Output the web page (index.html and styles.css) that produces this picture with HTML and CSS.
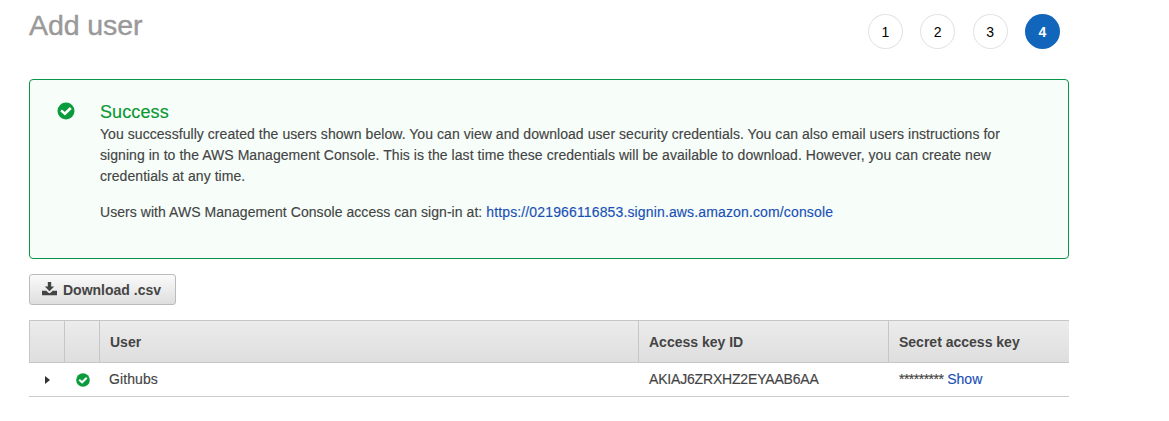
FILE: index.html
```html
<!DOCTYPE html>
<html lang="en">
<head>
    <meta charset="UTF-8">
    <meta name="viewport" content="width=device-width, initial-scale=1.0">
    <title>Add user</title>
    <link rel="stylesheet" href="styles.css">
</head>
<body>
    <div class="page">
        <header class="header">
            <h1>Add user</h1>
            <ol class="steps">
                <li class="step">1</li>
                <li class="step">2</li>
                <li class="step">3</li>
                <li class="step active">4</li>
            </ol>
        </header>

        <section class="alert">
            <svg class="alert-icon" viewBox="0 0 18 18">
                <circle cx="9" cy="9" r="8.5" fill="#0a9b3c"/>
                <path d="M4.1 8.4 L7.9 11.8 L13.8 6" fill="none" stroke="#fff" stroke-width="2.6"/>
            </svg>
            <div class="alert-body">
                <h2>Success</h2>
                <p class="line-1">You successfully created the users shown below. You can view and download user security credentials. You can also email users instructions for</p>
                <p class="line-2">signing in to the AWS Management Console. This is the last time these credentials will be available to download. However, you can create new</p>
                <p>credentials at any time.</p>
                <p class="signin">Users with AWS Management Console access can sign-in at: <a href="#">https://021966116853.signin.aws.amazon.com/console</a></p>
            </div>
        </section>

        <button class="download">
            <svg class="download-icon" viewBox="0 0 15 14">
                <path d="M5.8 0h3.4v4.5h3L7.5 9.3 2.8 4.5h3z" fill="#444"/>
                <path d="M0 8.8h4.3l1.8 1.8a2 2 0 0 0 2.8 0l1.8-1.8H15v4.4H0z" fill="#444"/>
            </svg>
            <span>Download .csv</span>
        </button>

        <table class="users">
            <thead>
                <tr>
                    <th class="col-expand"></th>
                    <th class="col-status"></th>
                    <th class="col-user">User</th>
                    <th class="col-key">Access key ID</th>
                    <th class="col-secret">Secret access key</th>
                </tr>
            </thead>
            <tbody>
                <tr>
                    <td><span class="arrow"></span></td>
                    <td>
                        <svg class="status-icon" viewBox="0 0 18 18">
                            <circle cx="9" cy="9" r="8.8" fill="#0a9b3c"/>
                            <path d="M4.1 8.6 L7.9 12 L13.8 6.2" fill="none" stroke="#fff" stroke-width="2.6"/>
                        </svg>
                    </td>
                    <td class="name">Githubs</td>
                    <td class="key">AKIAJ6ZRXHZ2EYAAB6AA</td>
                    <td><span class="stars">*********</span> <a href="#">Show</a></td>
                </tr>
            </tbody>
        </table>
    </div>
</body>
</html>
```
FILE: styles.css
```css
* {
    margin: 0;
    padding: 0;
    box-sizing: border-box;
}
body {
    font-family: "Liberation Sans", Arial, sans-serif;
    font-size: 14px;
    color: #444;
    background-color: #fff;
}
a {
    color: #1a50b5;
    text-decoration: none;
}
.page {
    width: 1040px;
    margin-left: 29px;
}
.header {
    display: flex;
    justify-content: space-between;
    height: 79px;
    padding-right: 9px;
}
.header h1 {
    margin-top: 9px;
    font-size: 28.5px;
    line-height: 33px;
    font-weight: normal;
    letter-spacing: -0.1px;
    color: #999;
    -webkit-text-stroke: 0.4px #999;
}
.steps {
    display: flex;
    gap: 17.4px;
    padding-top: 14px;
    list-style: none;
}
.step {
    width: 35px;
    height: 35px;
    line-height: 36px;
    border-radius: 50%;
    box-shadow: inset 0 0 0 1px #e3e3e3;
    text-align: center;
    color: #000;
}
.step.active {
    background-color: #1166bb;
    box-shadow: none;
    color: #fff;
    font-weight: bold;
}

.alert {
    display: flex;
    height: 180px;
    padding: 21px 27px;
    border: 1px solid #0a9648;
    border-radius: 4px;
    background-color: #f7fefa;
}
.alert-icon {
    width: 18px;
    height: 18px;
    margin: 1px 25px 0 0;
}
.alert-body {
    white-space: nowrap;
    line-height: 21px;
    letter-spacing: 0.055px;
    -webkit-text-stroke: 0.15px;
}
.alert-body h2 {
    margin-bottom: 1px;
    font-size: 18px;
    line-height: 22px;
    font-weight: normal;
    letter-spacing: 0.1px;
    color: #0a9632;
}
.alert-body .signin {
    margin-top: 15px;
}
.alert-body a {
    letter-spacing: 0.14px;
}

.download {
    display: flex;
    align-items: center;
    width: 147px;
    height: 31px;
    margin: 15px 0;
    padding-left: 12px;
    border: 1px solid #bbb;
    border-radius: 3px;
    background: linear-gradient(to bottom, #fafafa, #dedede);
    font-family: inherit;
    font-size: 14px;
    font-weight: bold;
    color: #444;
    white-space: nowrap;
}
.download-icon {
    width: 15px;
    height: 14px;
    margin: -2px 6px 0 0;
}

.users {
    width: 1040px;
    table-layout: fixed;
    border-collapse: separate;
    border-spacing: 0;
}
.users th {
    height: 43px;
    padding: 1px 10px 0;
    border-top: 1px solid #c6c6c6;
    border-bottom: 1px solid #c6c6c6;
    border-right: 1px solid #c6c6c6;
    background: linear-gradient(to bottom, #ececec, #dedede);
    text-align: left;
}
.users th:first-child {
    border-left: 1px solid #c6c6c6;
}
.users th:last-child {
    border-right: none;
}
.users td {
    height: 34px;
    padding: 0 10px 2px;
    border-bottom: 1px solid #ccc;
    white-space: nowrap;
    -webkit-text-stroke: 0.15px;
}
.users td.name {
    padding-left: 9px;
    letter-spacing: 0.1px;
}
.users td.key {
    letter-spacing: -0.18px;
}
.stars {
    letter-spacing: -0.52px;
}
.col-expand {
    width: 36px;
}
.col-status {
    width: 35px;
}
.col-user {
    width: 539px;
}
.col-key {
    width: 250px;
}
.col-secret {
    width: 180px;
}
.arrow {
    display: block;
    width: 0;
    margin: 3px 0 0 6px;
    border: 4.5px solid transparent;
    border-left: 5px solid #333;
    border-right: none;
}
.status-icon {
    display: block;
    width: 14px;
    height: 14px;
    margin: 3px 0 0 1px;
}
```
